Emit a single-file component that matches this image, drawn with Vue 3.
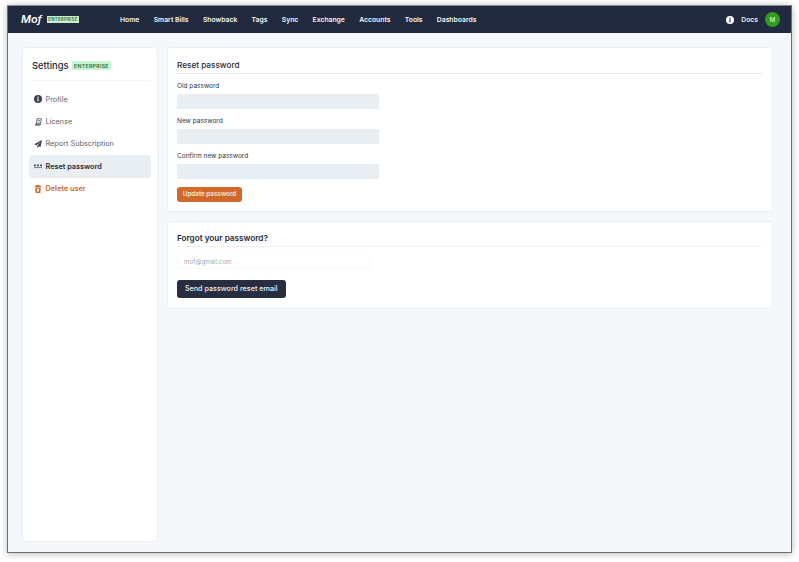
<template>
  <div class="screen">
    <div class="window">
      <!-- top bar -->
      <header class="navbar">
        <div class="brand">
          <span class="logo">Mof</span>
          <span class="brand-badge">ENTERPRISE</span>
        </div>
        <nav class="nav-links">
          <a v-for="link in links" :key="link">{{ link }}</a>
        </nav>
        <div class="nav-right">
          <svg class="info" viewBox="0 0 16 16">
            <circle cx="8" cy="8" r="8" fill="#fff" />
            <rect x="6.8" y="6.8" width="2.4" height="5.6" fill="#212a3e" />
            <circle cx="8" cy="4.4" r="1.4" fill="#212a3e" />
          </svg>
          <span class="docs">Docs</span>
          <span class="avatar">M</span>
        </div>
      </header>

      <main class="content">
        <aside class="sidebar">
          <div class="side-head">
            <span class="side-title">Settings</span>
            <span class="side-badge">ENTERPRISE</span>
          </div>
          <ul class="menu">
            <li v-for="item in menu" :key="item.label" :class="{ active: item.active, danger: item.danger }">
              <svg class="menu-icon" viewBox="0 0 16 16" v-html="item.icon"></svg>
              <span>{{ item.label }}</span>
            </li>
          </ul>
        </aside>

        <section class="panels">
          <div class="card card-reset">
            <h2 class="card-title">Reset password</h2>
            <div v-for="f in fields" :key="f" class="field">
              <label>{{ f }}</label>
              <div class="input"></div>
            </div>
            <button class="btn-orange">Update password</button>
          </div>

          <div class="card card-forgot">
            <h2 class="card-title strong">Forgot your password?</h2>
            <div class="email">mof@gmail.com</div>
            <button class="btn-dark">Send password reset email</button>
          </div>
        </section>
      </main>
    </div>
  </div>
</template>

<script setup>
const links = ['Home', 'Smart Bills', 'Showback', 'Tags', 'Sync', 'Exchange', 'Accounts', 'Tools', 'Dashboards']
const fields = ['Old password', 'New password', 'Confirm new password']

const menu = [
  {
    label: 'Profile',
    icon: '<circle cx="8" cy="8" r="8" fill="currentColor"/><rect x="6.8" y="6.8" width="2.4" height="5.6" fill="#fff"/><circle cx="8" cy="4.4" r="1.4" fill="#fff"/>'
  },
  {
    label: 'License',
    icon: '<path d="M6 1.500h8.500L13 12H4.500z M3 14.500h8.500L13 12H3.500z" fill="none" stroke="currentColor" stroke-width="1.500"/><path d="M7.500 5h4.500M7 8h4.500" stroke="currentColor" stroke-width="1.200"/>'
  },
  {
    label: 'Report Subscription',
    icon: '<path d="M16 0 0 8.500l5 2L13.500 3 6.500 11.500V16l3-3.500 3.500 1.500z" fill="currentColor"/>'
  },
  {
    label: 'Reset password',
    active: true,
    icon: '<g fill="currentColor"><rect x="0" y="5" width="3.600" height="3.600"/><rect x="6.200" y="5" width="3.600" height="3.600"/><rect x="12.400" y="5" width="3.600" height="3.600"/><rect x="0" y="10.800" width="16" height="1.300"/></g>'
  },
  {
    label: 'Delete user',
    danger: true,
    icon: '<path d="M5.500 0h5l.7 1.500H14.500v2.500h-13V1.500h3.300zM2.500 5h11L12.700 16H3.300z" fill="currentColor"/><rect x="6" y="7.500" width="4" height="5.500" fill="#fff"/>'
  }
]
</script>

<style>
html, body {
  margin: 0;
  background: #fff;
}
</style>

<style scoped>
.screen {
  width: 799px;
  height: 562px;
  padding: 5px 7px 9px 7px;
  box-sizing: border-box;
  overflow: hidden;
  background: #fff;
  font-family: Inter, "Liberation Sans", sans-serif;
}
.window {
  height: 100%;
  display: flex;
  flex-direction: column;
  background: #f4f8fb;
  border: 1px solid #6e6f71;
  border-top-color: #8a8c90;
  box-sizing: border-box;
  box-shadow: 0 1px 7px rgba(0, 0, 0, 0.28);
}

/* top bar */
.navbar {
  height: 27px;
  flex: none;
  display: flex;
  align-items: center;
  background: #212a3e;
  color: #fff;
  padding: 0 11px 0 13px;
}
.brand {
  width: 99px;
  display: flex;
  align-items: center;
  gap: 5px;
}
.logo {
  font-size: 10.800px;
  font-weight: 600;
  font-style: italic;
}
.brand-badge {
  background: #c9efd0;
  color: #1d6b38;
  font-size: 4.300px;
  font-weight: 600;
  letter-spacing: 0.3px;
  padding: 1px 1.500px;
  line-height: 5.500px;
}
.nav-links {
  display: flex;
  gap: 14.300px;
  flex: 1;
}
.nav-links a {
  font-size: 6.800px;
  font-weight: 600;
  color: #f4f5f7;
  white-space: nowrap;
}
.nav-right {
  display: flex;
  align-items: center;
}
.info {
  width: 8px;
  height: 8px;
}
.docs {
  margin-left: 7.500px;
  font-size: 6.800px;
  font-weight: 600;
  color: #e6e8ec;
}
.avatar {
  margin-left: 7px;
  width: 15px;
  height: 15px;
  border-radius: 50%;
  background: #2f9e1f;
  color: #dff3da;
  font-size: 6px;
  font-weight: 500;
  display: flex;
  align-items: center;
  justify-content: center;
}

/* page body */
.content {
  flex: 1;
  min-height: 0;
  display: flex;
  gap: 9px;
  padding: 14px 18px 10px 14px;
}
.sidebar {
  width: 136px;
  flex: none;
  box-sizing: border-box;
  background: #fff;
  border: 1px solid #ebeff4;
  border-radius: 4px;
  padding: 0 6px;
}
.side-head {
  height: 33px;
  margin: 0 1px;
  display: flex;
  align-items: center;
  gap: 3.500px;
  padding: 3px 2px 0;
  box-sizing: border-box;
  border-bottom: 1px solid #f3f4f6;
}
.side-title {
  font-size: 9.400px;
  font-weight: 500;
  color: #1f2937;
}
.side-badge {
  background: #c9f2d3;
  color: #1d6b38;
  font-size: 5.200px;
  font-weight: 600;
  letter-spacing: 0.3px;
  padding: 1.500px 2px;
  line-height: 6px;
  border-radius: 1px;
}
.menu {
  list-style: none;
  margin: 7px 0 0;
  padding: 0;
}
.menu li {
  height: 22.400px;
  display: flex;
  align-items: center;
  gap: 3.500px;
  padding-left: 5px;
  border-radius: 3px;
  font-size: 7.300px;
  font-weight: 400;
  color: #5b6472;
}
.menu li.active {
  background: #e9eef3;
  color: #1f2937;
  font-weight: 600;
}
.menu li.danger {
  color: #d2692a;
  font-weight: 600;
}
.menu-icon {
  width: 8px;
  height: 8px;
  flex: none;
  color: #3b4352;
}
.menu li.danger .menu-icon {
  color: #d2692a;
}

/* right column */
.panels {
  flex: 1;
  display: flex;
  flex-direction: column;
  gap: 9px;
}
.card {
  background: #fff;
  border: 1px solid #ebeff4;
  border-radius: 3px;
  padding: 0 10px 0 9px;
  box-sizing: border-box;
}
.card-reset {
  height: 165px;
  padding-top: 11px;
}
.card-forgot {
  height: 87.500px;
  padding-top: 10px;
}
.card-title {
  margin: 0;
  height: 14px;
  line-height: 12px;
  font-size: 8.200px;
  font-weight: 500;
  color: #1f2937;
  border-bottom: 1px solid #e7e9f0;
}
.card-title.strong {
  font-weight: 600;
  border-bottom-color: #eff0f3;
}
.field {
  margin-top: 7.500px;
  margin-bottom: 7.500px;
}
.field label {
  display: block;
  font-size: 6.500px;
  line-height: 9px;
  font-weight: 400;
  color: #2d3644;
  margin-bottom: 3.500px;
}
.input {
  width: 202px;
  height: 15px;
  background: #e9eef3;
}
.btn-orange {
  display: block;
  height: 15px;
  width: 65px;
  padding: 0;
  border: none;
  border-radius: 3px;
  background: #d2692a;
  color: #fae6d8;
  font-family: inherit;
  font-size: 6.300px;
  font-weight: 600;
}
.email {
  width: 193px;
  height: 15px;
  margin-top: 7px;
  padding-left: 6px;
  box-sizing: border-box;
  border: 1px solid #f7f8fa;
  border-top: 1px solid #fbfbfc;
  font-size: 6.200px;
  line-height: 13px;
  color: #a3a8b0;
}
.btn-dark {
  display: block;
  margin-top: 10.500px;
  height: 18.500px;
  width: 108.500px;
  padding: 0;
  border: none;
  border-radius: 3px;
  background: #272e42;
  color: #eceef2;
  font-family: inherit;
  font-size: 7.200px;
  font-weight: 500;
}
</style>
